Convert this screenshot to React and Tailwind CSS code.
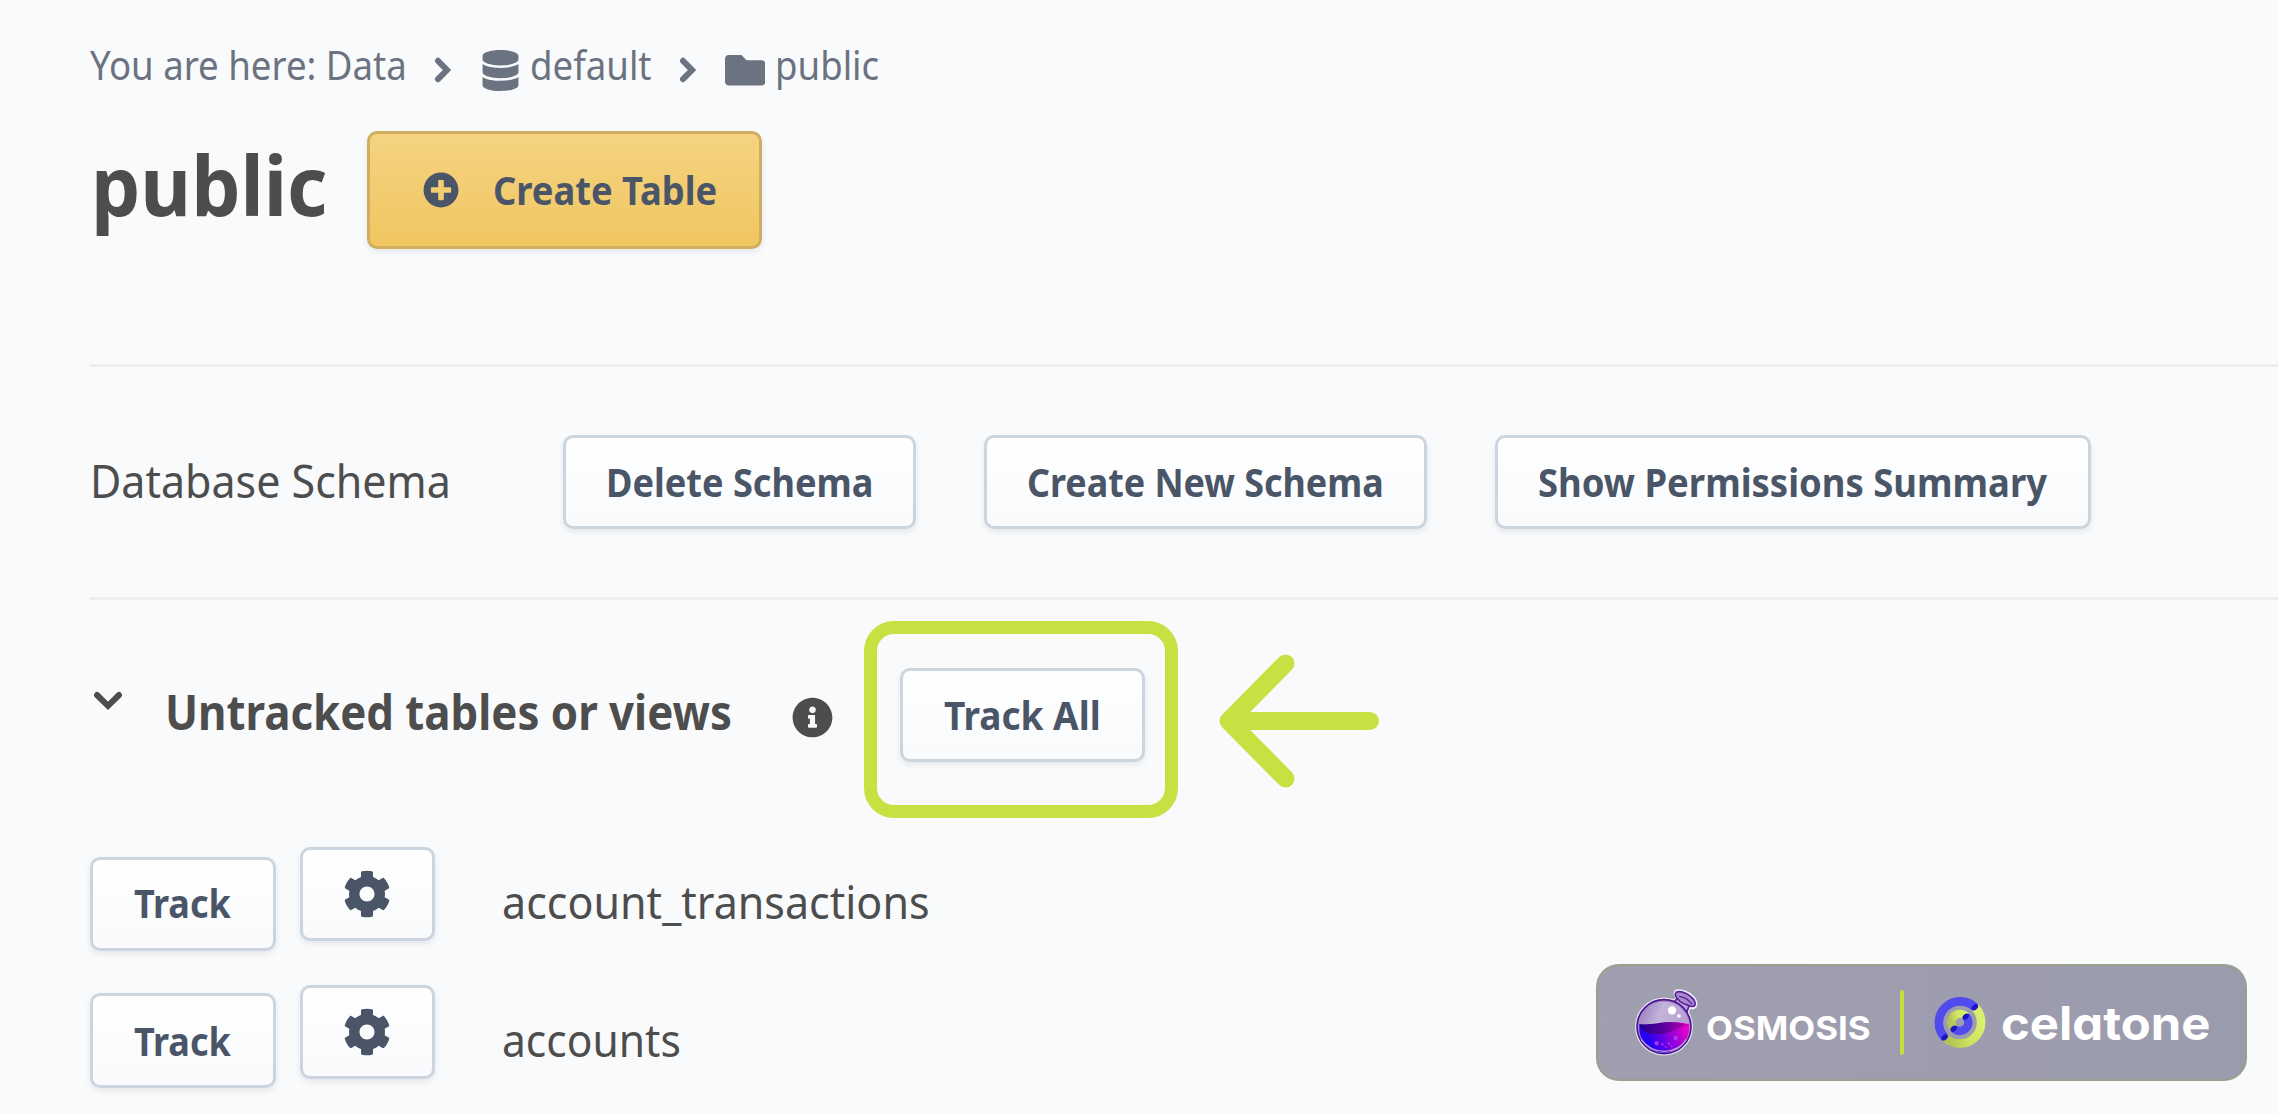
import React from "react";
import { FaDatabase, FaFolder, FaPlusCircle, FaInfoCircle, FaCog } from "react-icons/fa";

// Single-line label squeezed horizontally inside a fixed-width box.
function Label({ box, text, children }) {
  return (
    <span className={`block shrink-0 whitespace-nowrap ${box}`}>
      <span className={`inline-block origin-left ${text}`}>{children}</span>
    </span>
  );
}

function Button({ className, children }) {
  return (
    <button
      className={`flex shrink-0 items-center rounded-[10px] border-[3px] border-[#cbd5e0] bg-linear-to-b from-white to-[#f8fafc] text-[40px] leading-[60px] font-bold text-[#4a5568] shadow-[0_3px_6px_rgba(0,0,0,0.08)] ${className}`}
    >
      {children}
    </button>
  );
}

function Crumb() {
  return (
    <svg className="mt-[22px] h-[28px] w-[18px] shrink-0" viewBox="0 0 18 28" fill="none" stroke="#6b7280" strokeWidth="6" strokeLinecap="round">
      <path d="M4 4.8 13 14 4 23.2" />
    </svg>
  );
}

function Flask() {
  return (
    <svg className="mt-[14px] h-[84px] w-[80px] shrink-0" viewBox="0 0 240 252">
      <defs>
        <linearGradient id="liquid" x1="0" y1="0.3" x2="1" y2="0">
          <stop offset="0.1" stopColor="#2400f4" />
          <stop offset="0.5" stopColor="#8a00dc" />
          <stop offset="0.95" stopColor="#f400c4" />
        </linearGradient>
        <linearGradient id="surface" x1="0" y1="0" x2="1" y2="0">
          <stop offset="0" stopColor="#22008c" />
          <stop offset="0.5" stopColor="#5c009c" />
          <stop offset="1" stopColor="#c400b4" />
        </linearGradient>
        <linearGradient id="glass" x1="0" y1="0" x2="1" y2="0.4">
          <stop offset="0" stopColor="#9275b8" />
          <stop offset="0.45" stopColor="#c3b4da" />
          <stop offset="1" stopColor="#b59fd2" />
        </linearGradient>
      </defs>
      <g stroke="#f3effa" strokeWidth="11" strokeLinejoin="round" fill="#f3effa">
        <circle cx="117" cy="140" r="81" />
        <path d="M149 66 158 52Q147 40 154 34Q170 30 194 44Q216 62 211 76Q206 86 192 80L186 96Z" />
      </g>
      <path d="M146 68 160 50 194 74 182 104Z" fill="#b9a3d4" stroke="#5a1e9e" strokeWidth="5" />
      <path d="M154 36Q170 31 193 46Q214 62 210 75Q205 84 187 75Q160 66 152 48Q150 40 154 36Z" fill="#a98bc8" stroke="#5a1e9e" strokeWidth="5" />
      <path d="M162 49Q184 51 201 72" fill="none" stroke="#5a1e9e" strokeWidth="4" />
      <circle cx="117" cy="140" r="81" fill="#a18cc4" stroke="#4c1294" strokeWidth="5" />
      <circle cx="117" cy="140" r="75" fill="url(#glass)" />
      <path d="M43 133Q78 138 118 129 155 123 192 132A75 75 0 0 1 43 153Z" fill="url(#liquid)" />
      <path d="M43 133Q78 135 118 127 155 123 191 135 172 139 146 152 110 168 73 161 45 152 43 133Z" fill="url(#surface)" />
      <path d="M48 178Q76 214 118 214 164 212 184 178" fill="none" stroke="#b7a0dc" strokeWidth="4" />
      <circle cx="141" cy="91" r="12.5" fill="#fff" />
      <circle cx="162" cy="108" r="5.5" fill="#fff" />
      <g fill="#b23cf0" fillOpacity="0.8">
        <circle cx="95" cy="190" r="7" />
        <circle cx="152" cy="174" r="7" />
        <circle cx="112" cy="193" r="4" />
        <circle cx="132" cy="191" r="4" />
        <circle cx="122" cy="201" r="3" />
        <circle cx="140" cy="199" r="3" />
      </g>
    </svg>
  );
}

function CelatoneMark() {
  return (
    <svg className="mt-[19px] h-[70px] w-[70px] shrink-0" viewBox="0 0 210 210">
      <defs>
        <linearGradient id="lime" x1="0" y1="0.6" x2="1" y2="0.2">
          <stop offset="0" stopColor="#b2c255" />
          <stop offset="0.5" stopColor="#cfe562" />
          <stop offset="1" stopColor="#d9f06c" />
        </linearGradient>
      </defs>
      <path d="M150.5 67.5A64 64 0 0 1 59.5 157.5" fill="none" stroke="url(#lime)" strokeWidth="26" />
      <path d="M59.5 157.5A64 64 0 0 1 150.5 67.5" fill="none" stroke="#514bee" strokeWidth="26" />
      <path d="M122.5 94A25.5 25.5 0 0 1 86.5 130.5" fill="none" stroke="#514bee" strokeWidth="25" />
      <path d="M86.5 130.5A25.5 25.5 0 0 1 122.5 94" fill="none" stroke="url(#lime)" strokeWidth="25" />
      <g fill="#1812c8">
        <ellipse cx="149.5" cy="67" rx="11" ry="7.5" transform="rotate(-42 149.5 67)" />
        <ellipse cx="122" cy="95" rx="11" ry="7.5" transform="rotate(-42 122 95)" />
        <ellipse cx="86" cy="131" rx="11" ry="7.5" transform="rotate(-42 86 131)" />
        <ellipse cx="59" cy="157.5" rx="11" ry="7.5" transform="rotate(-42 59 157.5)" />
      </g>
    </svg>
  );
}

function TableRow({ className, trackClass, nameBox, nameScale, name }) {
  return (
    <div className={`flex items-start ${className}`}>
      <Button className={`w-[186px] pl-[40.5px] ${trackClass}`}>
        <Label box="w-[97px]" text="scale-x-[0.9]">Track</Label>
      </Button>
      <Button className="ml-[23.5px] h-[94px] w-[135px] justify-center">
        <FaCog className="h-[48px] w-[48px]" />
      </Button>
      <div className="mt-[23.5px] ml-[67px] text-[46px] leading-[60px]">
        <Label box={nameBox} text={nameScale}>{name}</Label>
      </div>
    </div>
  );
}

export default function App() {
  return (
    <div className="relative h-[1114px] w-[2278px] overflow-hidden bg-[#f9fafc] pl-[90px] font-['Noto_Sans',sans-serif] text-[#4d4d4d]">
      <nav className="flex h-[131px] items-start pt-[34px] text-[40px] leading-[62px] text-[#6b7280]">
        <Label box="w-[317px]" text="scale-x-[0.915]">You are here: Data</Label>
        <span className="ml-[27px]"><Crumb /></span>
        <FaDatabase className="mt-[16px] ml-[28px] h-[41px] w-[41px]" />
        <Label box="ml-[9px] w-[122px]" text="scale-x-[0.915]">default</Label>
        <span className="ml-[27px]"><Crumb /></span>
        <FaFolder className="mt-[16px] ml-[27.5px] h-[40.5px] w-[40.5px]" />
        <Label box="ml-[10px] w-[105px]" text="scale-x-[0.915]">public</Label>
      </nav>

      <header className="flex h-[118px] items-start">
        <h1 className="mt-[3px] ml-px text-[83px] leading-[100px] font-bold">
          <Label box="w-[236px]" text="scale-x-[0.941]">public</Label>
        </h1>
        <button className="ml-[40px] flex h-[118px] w-[395px] items-center rounded-[10px] border-[3px] border-[#cfae60] bg-linear-to-b from-[#f5d381] to-[#f0c660] pl-[53px] text-[40px] leading-[60px] font-bold text-[#4a5568] shadow-[0_3px_6px_rgba(0,0,0,0.08)]">
          <FaPlusCircle className="h-[36px] w-[36px] shrink-0" />
          <Label box="ml-[34px] w-[224px]" text="scale-x-[0.907]">Create Table</Label>
        </button>
      </header>

      <section className="mt-[115px] flex h-[236px] items-start border-y-[3px] border-[#eeeeee]">
        <h2 className="mt-[83px] text-[46px] leading-[60px]">
          <Label box="w-[362px]" text="scale-x-[0.934]">Database Schema</Label>
        </h2>
        <Button className="mt-[68px] ml-[111px] h-[94px] w-[353px] pl-[39.5px]">
          <Label box="w-[267px]" text="scale-x-[0.903]">Delete Schema</Label>
        </Button>
        <Button className="mt-[68px] ml-[67.5px] h-[94px] w-[443.5px] pl-[40.5px]">
          <Label box="w-[357px]" text="scale-x-[0.896]">Create New Schema</Label>
        </Button>
        <Button className="mt-[68px] ml-[67.5px] h-[94px] w-[596px] pl-[40.5px]">
          <Label box="w-[509px]" text="scale-x-[0.911]">Show Permissions Summary</Label>
        </Button>
      </section>

      <section className="flex h-[218px] items-start">
        <svg className="mt-[90px] ml-[3px] h-[21px] w-[30px] shrink-0" viewBox="0 0 30 21" fill="none" stroke="#4d4d4d" strokeWidth="6" strokeLinecap="round">
          <path d="M4 5 15 15.8 26 5" />
        </svg>
        <h2 className="mt-[82px] ml-[41.5px] text-[48px] leading-[60px] font-bold">
          <Label box="w-[567px]" text="scale-x-[0.912]">Untracked tables or views</Label>
        </h2>
        <FaInfoCircle className="mt-[97px] ml-[60.5px] h-[41px] w-[41px] shrink-0" />
        <div className="mt-[21px] ml-[31px] h-[197px] w-[314px] shrink-0 rounded-[30px] border-[13px] border-[#c6e141] pt-[34px] pl-[22.5px]">
          <Button className="h-[94px] w-[245px] pl-[41px]">
            <Label box="w-[158px]" text="scale-x-[0.925]">Track All</Label>
          </Button>
        </div>
        <svg className="mt-[50.5px] ml-[41px] h-[140px] w-[162px] shrink-0" viewBox="0 0 162 140" fill="none" stroke="#c6e141" strokeWidth="18" strokeLinecap="round" strokeLinejoin="round">
          <path d="M66.5 12.5 9.5 70 66.5 127.5M9.5 70H151" />
        </svg>
      </section>

      <TableRow className="mt-[29px] h-[104px]" trackClass="mt-[10px] h-[94px] pb-[2px]" nameBox="w-[428px]" nameScale="scale-x-[0.935]" name="account_transactions" />
      <TableRow className="mt-[34px] h-[104px]" trackClass="mt-[8px] h-[95px]" nameBox="w-[180px]" nameScale="scale-x-[0.925]" name="accounts" />

      <aside className="absolute top-[964px] left-[1596px] flex h-[117px] w-[651px] items-start rounded-[23px] border-2 border-[#9b9f90] bg-linear-to-r from-[#9f9faf] to-[#9b9bae] pl-[27px] font-['Inter',sans-serif] text-white">
        <Flask />
        <Label box="mt-[42px] ml-px w-[165px]" text="text-[33px] leading-[40px] font-bold scale-x-[1.058]">OSMOSIS</Label>
        <span className="mt-[23.5px] ml-[29px] h-[65px] w-[4px] rounded-xs bg-[#c4e03b]" />
        <span className="ml-[21px]"><CelatoneMark /></span>
        <Label box="ml-[6px] mt-[27px] w-[210px]" text="text-[46px] leading-[60px] font-bold [font-feature-settings:'cv11'] scale-x-[1.065]">celatone</Label>
      </aside>
    </div>
  );
}
